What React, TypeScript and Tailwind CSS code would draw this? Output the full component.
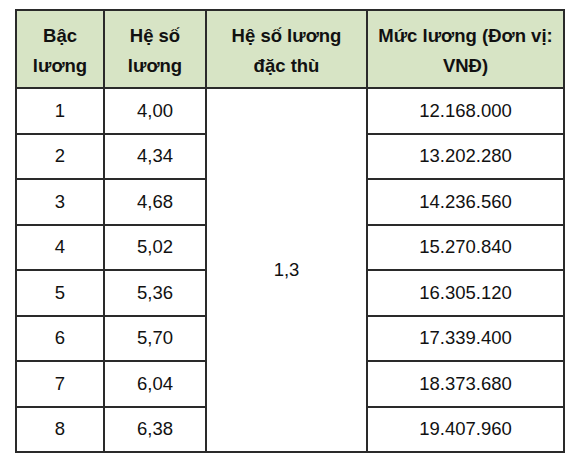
import React from "react";

const rows = [
  ["1", "4,00", "12.168.000"],
  ["2", "4,34", "13.202.280"],
  ["3", "4,68", "14.236.560"],
  ["4", "5,02", "15.270.840"],
  ["5", "5,36", "16.305.120"],
  ["6", "5,70", "17.339.400"],
  ["7", "6,04", "18.373.680"],
  ["8", "6,38", "19.407.960"],
];

export default function App() {
  const th = "border-2 border-[#2a2a2a] bg-[#d7e4c5] font-bold text-center align-middle leading-[30px] pt-[3px]";
  const td = "border-2 border-[#2a2a2a] text-center align-middle h-[45.5px]";
  return (
    <div className="w-[580px] h-[469px] bg-white pl-[15px] pt-[9px]" style={{ fontFamily: '"Liberation Sans", Arial, sans-serif' }}>
      <table className="border-collapse table-fixed text-[18.5px] text-[#111]">
        <colgroup>
          <col className="w-[88px]" />
          <col className="w-[102px]" />
          <col className="w-[161px]" />
          <col className="w-[197px]" />
        </colgroup>
        <thead>
          <tr className="h-[78px]">
            <th className={th}>Bậc<br />lương</th>
            <th className={th}>Hệ số<br />lương</th>
            <th className={th}>Hệ số lương<br />đặc thù</th>
            <th className={th}>Mức lương (Đơn vị:<br />VNĐ)</th>
          </tr>
        </thead>
        <tbody>
          {rows.map((r, i) => (
            <tr key={i}>
              <td className={td}>{r[0]}</td>
              <td className={td}>{r[1]}</td>
              {i === 0 && (
                <td rowSpan={8} className="border-2 border-[#2a2a2a] text-center align-middle">1,3</td>
              )}
              <td className={td}>{r[2]}</td>
            </tr>
          ))}
        </tbody>
      </table>
    </div>
  );
}
